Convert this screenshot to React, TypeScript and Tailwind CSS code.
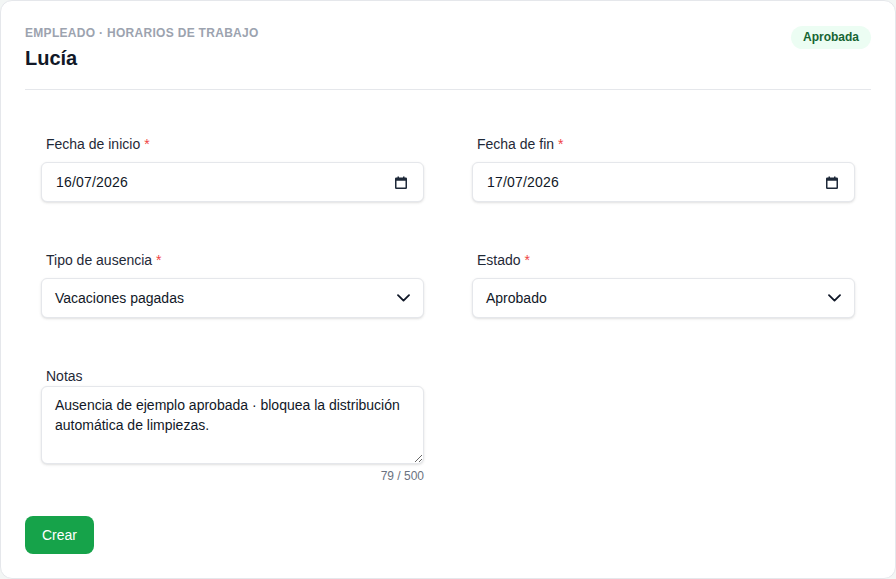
import React from "react";

const font = { fontFamily: '"Liberation Sans", Arial, sans-serif' };

function CalendarIcon() {
  return (
    <svg width="12" height="13" viewBox="0 0 12 13" className="text-gray-800">
      <rect x="0.75" y="2.25" width="10.5" height="10" rx="0.5" fill="none" stroke="currentColor" strokeWidth="1.5" />
      <rect x="0.75" y="2.25" width="10.5" height="2.5" fill="currentColor" />
      <rect x="2.5" y="0.5" width="1.5" height="2.5" fill="currentColor" />
      <rect x="8" y="0.5" width="1.5" height="2.5" fill="currentColor" />
    </svg>
  );
}

function Chevron() {
  return (
    <svg width="13" height="8" viewBox="0 0 13 8" className="text-gray-900">
      <polyline points="1,1.2 6.5,6.6 12,1.2" fill="none" stroke="currentColor" strokeWidth="1.8" strokeLinecap="round" strokeLinejoin="round" />
    </svg>
  );
}

function Label({ text, required }: { text: string; required?: boolean }) {
  return (
    <div className="pl-[5px] text-sm leading-5 text-[#1f2937]">
      {text}
      {required && <span className="ml-1 text-[#ef4444]">*</span>}
    </div>
  );
}

function DateField({ label, value }: { label: string; value: string }) {
  return (
    <div>
      <Label text={label} required />
      <div className="mt-2 flex h-10 items-center justify-between rounded-md border border-[#e5e7eb] bg-white pl-[14px] pr-[16px] text-sm text-[#111827] shadow-sm">
        <span className="tracking-[0.2px]">{value}</span>
        <CalendarIcon />
      </div>
    </div>
  );
}

function SelectField({ label, value }: { label: string; value: string }) {
  return (
    <div>
      <Label text={label} required />
      <div className="mt-2 flex h-10 items-center justify-between rounded-md border border-[#e5e7eb] bg-white pl-[13px] pr-[13px] text-sm text-[#111827] shadow-sm">
        <span>{value}</span>
        <Chevron />
      </div>
    </div>
  );
}

export default function App() {
  const notes = "Ausencia de ejemplo aprobada · bloquea la distribución automática de limpiezas.";
  return (
    <div className="min-h-[579px] bg-[#f3f6f5]" style={font}>
      <div className="min-h-[579px] rounded-xl border border-[#e5e7eb] bg-white p-6">
        {/* header */}
        <div className="flex items-start justify-between border-b border-[#e5e7eb] pb-[17px]">
          <div>
            <div className="text-xs font-bold uppercase leading-4 tracking-wide text-[#9ca3af]">
              Empleado · Horarios de trabajo
            </div>
            <h1 className="mt-[3px] text-xl font-bold leading-7 text-[#111827]">Lucía</h1>
          </div>
          <span className="mt-[1px] rounded-full bg-[#ecfdf3] px-3 py-1 text-xs font-bold leading-[15px] text-[#166534]">
            Aprobada
          </span>
        </div>

        {/* form */}
        <div className="grid grid-cols-2 gap-x-12 gap-y-12 px-4 pt-[44px]">
          <DateField label="Fecha de inicio" value="16/07/2026" />
          <DateField label="Fecha de fin" value="17/07/2026" />
          <SelectField label="Tipo de ausencia" value="Vacaciones pagadas" />
          <SelectField label="Estado" value="Aprobado" />
          <div>
            <Label text="Notas" />
            <textarea
              readOnly
              defaultValue={notes}
              className="block h-[78px] w-full resize-y rounded-md border border-[#e5e7eb] bg-white px-[13px] py-2 text-sm leading-5 text-[#111827] shadow-sm outline-none"
              style={font}
            />
            <div className="mt-1 text-right text-xs leading-4 text-[#6b7280]">79 / 500</div>
          </div>
        </div>

        <button className="mt-8 rounded-lg bg-[#16a34a] px-[17px] py-[9px] text-sm leading-5 text-white">
          Crear
        </button>
      </div>
    </div>
  );
}
